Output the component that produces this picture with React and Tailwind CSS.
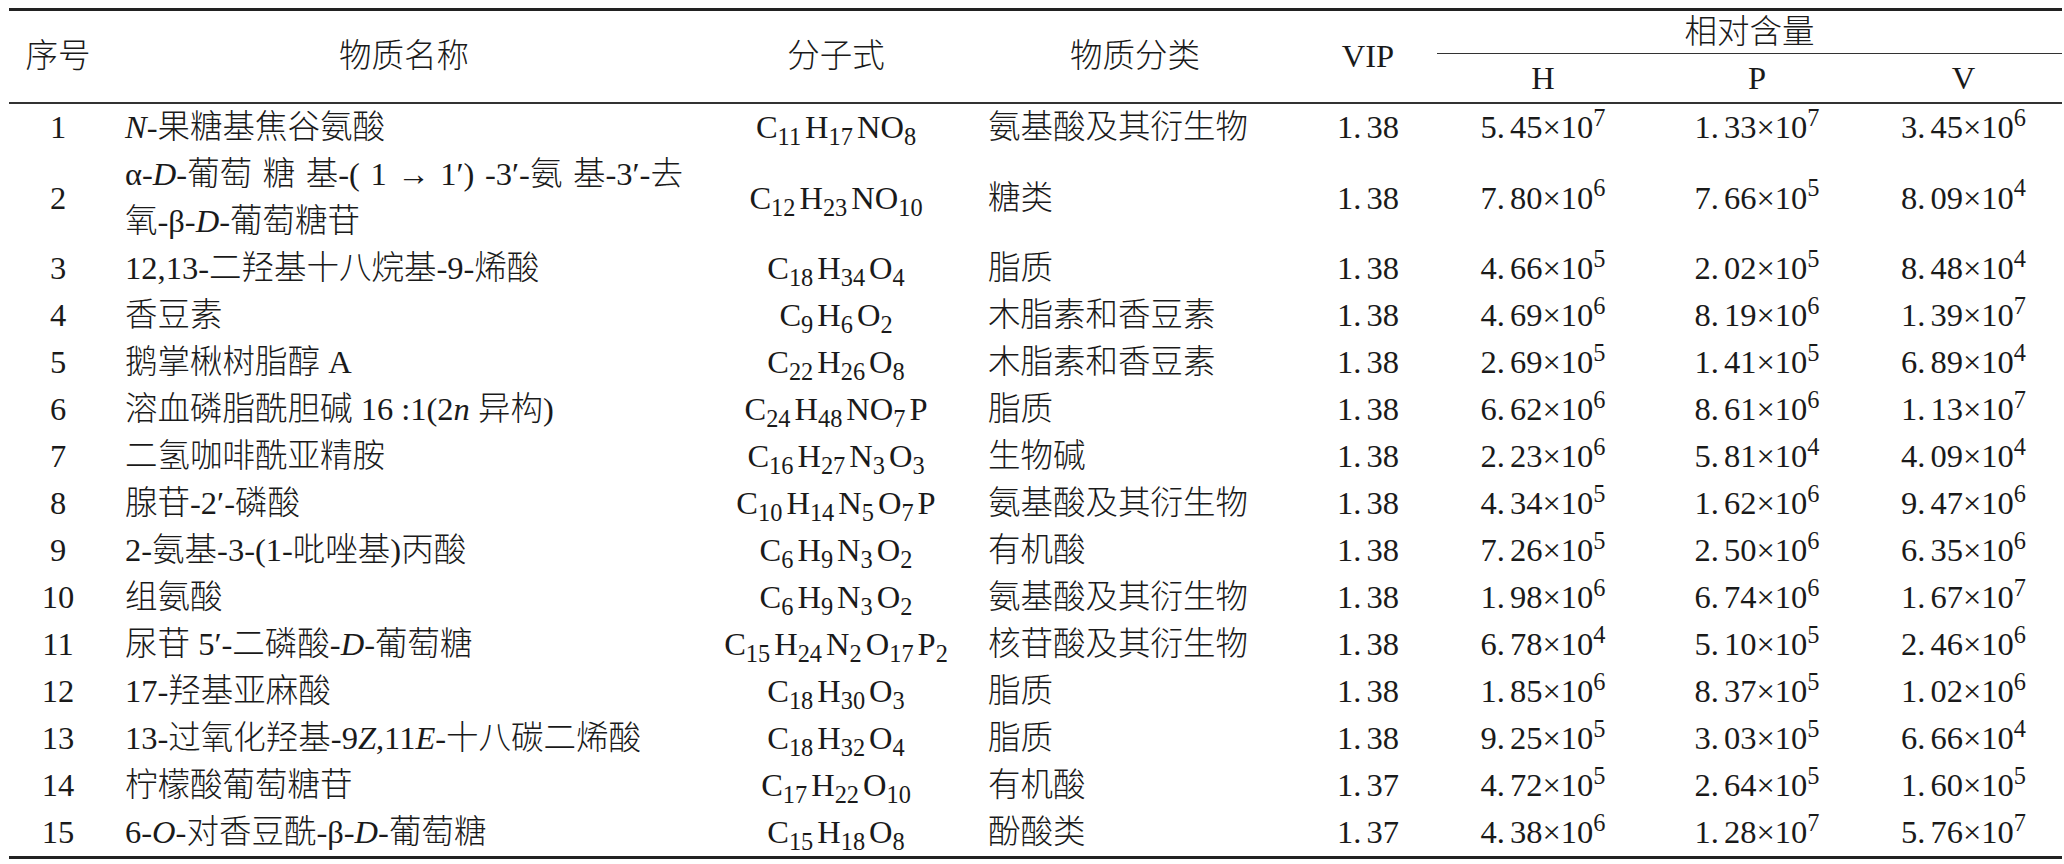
const rows = [
    ["1", <><i>N</i>-果糖基焦谷氨酸</>, ["C", "11", "H", "17", "NO", "8"], "氨基酸及其衍生物", "1.38", ["5.45", "7"], ["1.33", "7"], ["3.45", "6"]],
    ["2", null, ["C", "12", "H", "23", "NO", "10"], "糖类", "1.38", ["7.80", "6"], ["7.66", "5"], ["8.09", "4"]],
    ["3", "12,13-二羟基十八烷基-9-烯酸", ["C", "18", "H", "34", "O", "4"], "脂质", "1.38", ["4.66", "5"], ["2.02", "5"], ["8.48", "4"]],
    ["4", "香豆素", ["C", "9", "H", "6", "O", "2"], "木脂素和香豆素", "1.38", ["4.69", "6"], ["8.19", "6"], ["1.39", "7"]],
    ["5", "鹅掌楸树脂醇 A", ["C", "22", "H", "26", "O", "8"], "木脂素和香豆素", "1.38", ["2.69", "5"], ["1.41", "5"], ["6.89", "4"]],
    ["6", <>溶血磷脂酰胆碱 16 :1(2<i>n</i> 异构)</>, ["C", "24", "H", "48", "NO", "7", "P", ""], "脂质", "1.38", ["6.62", "6"], ["8.61", "6"], ["1.13", "7"]],
    ["7", "二氢咖啡酰亚精胺", ["C", "16", "H", "27", "N", "3", "O", "3"], "生物碱", "1.38", ["2.23", "6"], ["5.81", "4"], ["4.09", "4"]],
    ["8", "腺苷-2′-磷酸", ["C", "10", "H", "14", "N", "5", "O", "7", "P", ""], "氨基酸及其衍生物", "1.38", ["4.34", "5"], ["1.62", "6"], ["9.47", "6"]],
    ["9", "2-氨基-3-(1-吡唑基)丙酸", ["C", "6", "H", "9", "N", "3", "O", "2"], "有机酸", "1.38", ["7.26", "5"], ["2.50", "6"], ["6.35", "6"]],
    ["10", "组氨酸", ["C", "6", "H", "9", "N", "3", "O", "2"], "氨基酸及其衍生物", "1.38", ["1.98", "6"], ["6.74", "6"], ["1.67", "7"]],
    ["11", <>尿苷 5′-二磷酸-<i>D</i>-葡萄糖</>, ["C", "15", "H", "24", "N", "2", "O", "17", "P", "2"], "核苷酸及其衍生物", "1.38", ["6.78", "4"], ["5.10", "5"], ["2.46", "6"]],
    ["12", "17-羟基亚麻酸", ["C", "18", "H", "30", "O", "3"], "脂质", "1.38", ["1.85", "6"], ["8.37", "5"], ["1.02", "6"]],
    ["13", <>13-过氧化羟基-9<i>Z</i>,11<i>E</i>-十八碳二烯酸</>, ["C", "18", "H", "32", "O", "4"], "脂质", "1.38", ["9.25", "5"], ["3.03", "5"], ["6.66", "4"]],
    ["14", "柠檬酸葡萄糖苷", ["C", "17", "H", "22", "O", "10"], "有机酸", "1.37", ["4.72", "5"], ["2.64", "5"], ["1.60", "5"]],
    ["15", <>6-<i>O</i>-对香豆酰-β-<i>D</i>-葡萄糖</>, ["C", "15", "H", "18", "O", "8"], "酚酸类", "1.37", ["4.38", "6"], ["1.28", "7"], ["5.76", "7"]]
];

const cols = "grid grid-cols-[98px_594px_270px_328px_138px_212px_216px_197px]";

const Formula = ({ parts }) => {
    const out = [];
    for (let i = 0; i < parts.length; i += 2) {
        out.push(
            <span key={i}>
                {parts[i]}
                {parts[i + 1] && <sub className="bottom-[-0.3em]">{parts[i + 1]}</sub>}
            </span>
        );
    }
    return <span className="inline-flex gap-[4px]">{out}</span>;
};

// the source puts a gap after the decimal point
const Num = ({ v }) => {
    const [a, b] = v.split(".");
    return (
        <span>
            {a}.<span className="ml-[5px]">{b}</span>
        </span>
    );
};

const Sci = ({ v }) => (
    <span>
        <Num v={v[0]} />×10<sup>{v[1]}</sup>
    </span>
);

const App = () => {
    return (
        <div className="min-h-screen bg-white pl-[9px] pr-[2px] pt-[8px] text-[#1a1a1a] font-['Liberation_Serif','Noto_Sans_CJK_SC',serif] font-light text-[32.5px] leading-[47px]">
            <div className="border-t-[3px] border-b-[3px] border-[#222]">
                <div className={`${cols} grid-rows-[43px_48px] border-b-2 border-[#333]`}>
                    <div className="row-span-2 flex items-center justify-center">序号</div>
                    <div className="row-span-2 flex items-center justify-center">物质名称</div>
                    <div className="row-span-2 flex items-center justify-center">分子式</div>
                    <div className="row-span-2 flex items-center justify-center">物质分类</div>
                    <div className="row-span-2 flex items-center justify-center">VIP</div>
                    <div className="col-span-3 flex items-center justify-center border-b border-[#333]">相对含量</div>
                    <div className="flex items-center justify-center">H</div>
                    <div className="flex items-center justify-center">P</div>
                    <div className="flex items-center justify-center">V</div>
                </div>
                {rows.map(r => (
                    <div
                        key={r[0]}
                        className={`${cols} items-center ${r[0] === "2" ? "h-[94px]" : "h-[47px]"}`}
                    >
                        <div className="text-center">{r[0]}</div>
                        <div className="px-[18px] whitespace-nowrap">
                            {r[0] === "2" ? (
                                <>
                                    <div className="flex justify-between">
                                        <span>α-<i>D</i>-葡萄</span>
                                        <span>糖</span>
                                        <span>基-(</span>
                                        <span>1</span>
                                        <span>→</span>
                                        <span>1′)</span>
                                        <span>-3′-氨</span>
                                        <span>基-3′-去</span>
                                    </div>
                                    <div>
                                        氧-β-<i>D</i>-葡萄糖苷
                                    </div>
                                </>
                            ) : (
                                r[1]
                            )}
                        </div>
                        <div className="flex justify-center">
                            <Formula parts={r[2]} />
                        </div>
                        <div className="pl-[17px]">{r[3]}</div>
                        <div className="text-center">
                            <Num v={r[4]} />
                        </div>
                        <div className="text-center">
                            <Sci v={r[5]} />
                        </div>
                        <div className="text-center">
                            <Sci v={r[6]} />
                        </div>
                        <div className="text-center">
                            <Sci v={r[7]} />
                        </div>
                    </div>
                ))}
            </div>
        </div>
    );
};

export default App;
